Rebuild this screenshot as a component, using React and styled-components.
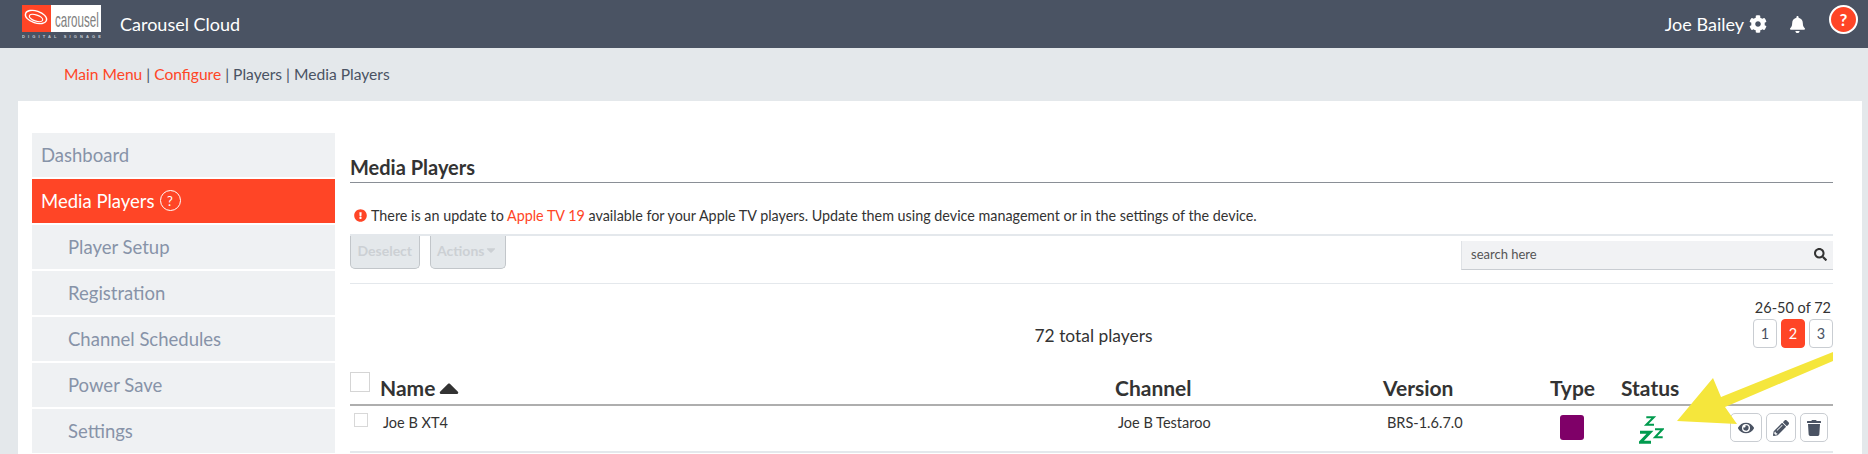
import React from 'react'
import styled, { createGlobalStyle } from 'styled-components'
import {
  FaCog, FaBell, FaEye, FaPencilAlt, FaTrash, FaCaretDown, FaSearch,
  FaExclamationCircle, FaCaretUp,
} from 'react-icons/fa'

const orange = '#ff4526'
const slate = '#4a5363'

const GlobalStyle = createGlobalStyle`
  html, body { margin: 0; padding: 0; height: 100%; overflow: hidden; }
  body {
    background: #e4e8eb;
    font-family: Lato, "Open Sans", sans-serif;
    color: #333;
  }
  * { box-sizing: border-box; }
`

// HEADER
const TopBar = styled.header`
  display: flex;
  align-items: center;
  height: 48px;
  padding: 0 10px 0 22px;
  background: ${slate};
  color: #fff;
`
const Logo = styled.svg`
  width: 79px;
  height: 36px;
  margin-bottom: 2px;
`
const AppName = styled.div`
  margin-left: 19px;
  font-size: 18px;
`
const UserArea = styled.div`
  display: flex;
  align-items: center;
  margin-left: auto;
  font-size: 18px;
`
const UserName = styled.span`
  margin-right: 5px;
`
const BellWrap = styled.span`
  display: flex;
  margin: 0 23px 0 22px;
  font-size: 17px;
`
const HelpBadge = styled.span`
  display: flex;
  align-items: center;
  justify-content: center;
  width: 29px;
  height: 29px;
  margin-bottom: 10px;
  border: 2px solid #fff;
  border-radius: 50%;
  background: ${orange};
  font-size: 17px;
  font-weight: 700;
`

// BREADCRUMB
const Crumbs = styled.nav`
  height: 53px;
  padding: 16px 0 0 64px;
  font-size: 15.6px;
  line-height: 20px;
  color: ${slate};
`
const CrumbLink = styled.span`
  color: ${orange};
`

// PAGE
const Card = styled.div`
  display: flex;
  height: 353px;
  margin: 0 6px 0 18px;
  padding: 32px 29px 0 14px;
  background: #fff;
  gap: 15px;
  overflow: hidden;
`
const Sidebar = styled.aside`
  display: flex;
  flex-direction: column;
  flex: none;
  width: 303px;
  gap: 2px;
`
const SideItem = styled.div`
  display: flex;
  align-items: center;
  flex: none;
  height: 44px;
  padding-left: ${p => (p.$sub ? '36px' : '9px')};
  padding-bottom: 1px;
  background: ${p => (p.$active ? orange : '#eff1f3')};
  color: ${p => (p.$active ? '#fff' : '#8793a8')};
  font-size: 18.5px;
`
const HelpRing = styled.span`
  display: flex;
  align-items: center;
  justify-content: center;
  width: 21px;
  height: 21px;
  margin-left: 5px;
  border: 1px solid #fff;
  border-radius: 50%;
  font-size: 13px;
`
const Main = styled.main`
  flex: 1;
  min-width: 0;
`
const Title = styled.h2`
  height: 50px;
  margin: 0;
  padding-top: 22px;
  border-bottom: 1px solid #8a8f96;
  font-size: 20px;
  font-weight: 700;
  line-height: 24px;
  color: #333;
`
const Notice = styled.div`
  display: flex;
  align-items: center;
  height: 53px;
  padding: 13px 0 0 4px;
  border-bottom: 2px solid #e4e8ec;
  font-size: 14.33px;
`
const NoticeIcon = styled(FaExclamationCircle)`
  margin-right: 4px;
  color: ${orange};
  font-size: 13px;
`
const Accent = styled.span`
  color: ${orange};
  white-space: pre;
`
const Tools = styled.div`
  display: flex;
  align-items: flex-start;
  height: 48px;
  border-bottom: 1px solid #e4e8ec;
`
const GhostButton = styled.div`
  display: flex;
  align-items: center;
  height: 33px;
  margin-top: 0;
  margin-right: 10px;
  padding: 0 6.5px 4px;
  border: 1px solid #c2c6ca;
  border-top: 0;
  border-radius: 0 0 5px 5px;
  background: #e4e8eb;
  color: #ccd0d4;
  font-size: 14px;
  font-weight: 700;
`
const Search = styled.div`
  display: flex;
  align-items: center;
  justify-content: space-between;
  width: 372px;
  height: 29px;
  margin: 5px 0 0 auto;
  padding: 0 6px 2px 9px;
  background: #f1f2f4;
  border-bottom: 1px solid #c9cdd2;
  border-left: 1px solid #dfe2e6;
  font-size: 13px;
  color: #555;
`
const SearchIcon = styled(FaSearch)`
  color: #333;
  font-size: 13px;
`
const PagerRow = styled.div`
  display: flex;
  align-items: flex-start;
  height: 84px;
`
const TotalLabel = styled.div`
  flex: 1;
  padding-top: 41px;
  padding-left: 84px;
  text-align: center;
  font-size: 17.4px;
`
const Pager = styled.div`
  display: flex;
  flex-direction: column;
  align-items: flex-end;
  padding-top: 14px;
`
const PagerLabel = styled.div`
  height: 21px;
  margin-right: 2px;
  font-size: 14.5px;
  line-height: 20px;
`
const PagerButtons = styled.div`
  display: flex;
  gap: 4px;
`
const PageButton = styled.div`
  display: flex;
  align-items: center;
  justify-content: center;
  width: 24px;
  height: 29px;
  border: 1px solid ${p => (p.$active ? orange : '#c9cdd2')};
  border-radius: 4px;
  background: ${p => (p.$active ? orange : '#fff')};
  color: ${p => (p.$active ? '#fff' : slate)};
  font-size: 14.5px;
`

// TABLE
const columns = '30px 735px 268px 167px 71px 1fr'

const HeadRow = styled.div`
  display: grid;
  grid-template-columns: ${columns};
  align-items: center;
  height: 38px;
  border-bottom: 2px solid #aeaeae;
  font-size: 21px;
  font-weight: 700;
  color: #333;
`
const HeadBox = styled.span`
  display: block;
  width: 20px;
  height: 20px;
  margin-bottom: 8px;
  border: 1px solid #d5d5d5;
`
const HeadCell = styled.div`
  display: flex;
  align-items: center;
  padding-top: 3px;
`
const SortIcon = styled(FaCaretUp)`
  margin-left: -2px;
  font-size: 32px;
`
const BodyRow = styled.div`
  display: grid;
  grid-template-columns: ${columns};
  height: 47px;
  border-bottom: 2px solid #e4e8ec;
  font-size: 14.5px;
`
const RowBox = styled.span`
  display: block;
  width: 14px;
  height: 14px;
  margin: 7px 0 0 4px;
  border: 1px solid #d8d8d8;
`
const BodyCell = styled.div`
  padding: 8px 0 0 ${p => (p.$inset ? 4 : 3)}px;
  line-height: 18px;
`
const Swatch = styled.span`
  display: block;
  width: 24px;
  height: 25px;
  margin: 1px 0 0 7px;
  border-radius: 3px;
  background: #7f0068;
`
const StatusCell = styled.div`
  display: flex;
  justify-content: space-between;
  padding: 7px 5px 0 18px;
`
const Sleep = styled.svg`
  width: 25px;
  height: 28px;
  margin-top: 3px;
`
const RowActions = styled.div`
  display: flex;
  gap: 4px;
  height: 29px;
`
const ActionButton = styled.div`
  display: flex;
  align-items: center;
  justify-content: center;
  width: ${p => p.$w}px;
  height: 29px;
  border: 1px solid #c9cdd2;
  border-radius: 5px;
  background: #fff;
  color: ${slate};
  font-size: 16px;
`

// ANNOTATION
const Arrow = styled.svg`
  position: absolute;
  left: 1660px;
  top: 340px;
  width: 190px;
  height: 100px;
`

const SideNav = ['Player Setup', 'Registration', 'Channel Schedules', 'Power Save', 'Settings']

const App = () => (
  <>
    <GlobalStyle />
    <TopBar>
      <Logo viewBox="0 0 79 36">
        <rect x="0" y="0" width="29" height="27" fill={orange} />
        <rect x="29" y="0" width="50" height="27" fill="#fff" />
        <ellipse cx="14" cy="12" rx="11" ry="6" fill="none" stroke="#fff" strokeWidth="1.4" transform="rotate(18 14 12)" />
        <ellipse cx="14" cy="13" rx="7" ry="3" fill="none" stroke="#fff" strokeWidth="1.2" transform="rotate(18 14 13)" />
        <text transform="translate(33 22) scale(.58 1)" fontFamily="Liberation Sans, sans-serif" fontSize="20" fill="#808080">carousel</text>
        <text x="0" y="33" fontFamily="Liberation Sans, sans-serif" fontSize="4" fontWeight="700" fill="#c6ccd4" textLength="79">DIGITAL SIGNAGE</text>
      </Logo>
      <AppName>Carousel Cloud</AppName>
      <UserArea>
        <UserName>Joe Bailey</UserName>
        <FaCog />
        <BellWrap><FaBell /></BellWrap>
        <HelpBadge>?</HelpBadge>
      </UserArea>
    </TopBar>
    <Crumbs>
      <CrumbLink>Main Menu</CrumbLink> | <CrumbLink>Configure</CrumbLink> | Players | Media Players
    </Crumbs>
    <Card>
      <Sidebar>
        <SideItem>Dashboard</SideItem>
        <SideItem $active>Media Players<HelpRing>?</HelpRing></SideItem>
        {SideNav.map(label => <SideItem $sub key={label}>{label}</SideItem>)}
      </Sidebar>
      <Main>
        <Title>Media Players</Title>
        <Notice>
          <NoticeIcon />
          <span>
            There is an update to <Accent>Apple TV 19</Accent> available for your Apple TV players. Update them using device management or in the settings of the device.
          </span>
        </Notice>
        <Tools>
          <GhostButton>Deselect</GhostButton>
          <GhostButton>Actions<FaCaretDown /></GhostButton>
          <Search>search here<SearchIcon /></Search>
        </Tools>
        <PagerRow>
          <TotalLabel>72 total players</TotalLabel>
          <Pager>
            <PagerLabel>26-50 of 72</PagerLabel>
            <PagerButtons>
              <PageButton>1</PageButton>
              <PageButton $active>2</PageButton>
              <PageButton>3</PageButton>
            </PagerButtons>
          </Pager>
        </PagerRow>
        <HeadRow>
          <HeadBox />
          <HeadCell>Name<SortIcon /></HeadCell>
          <HeadCell>Channel</HeadCell>
          <HeadCell>Version</HeadCell>
          <HeadCell>Type</HeadCell>
          <HeadCell>Status</HeadCell>
        </HeadRow>
        <BodyRow>
          <RowBox />
          <BodyCell>Joe B XT4</BodyCell>
          <BodyCell>Joe B Testaroo</BodyCell>
          <BodyCell $inset>BRS-1.6.7.0</BodyCell>
          <BodyCell><Swatch /></BodyCell>
          <StatusCell>
            <Sleep viewBox="0 0 25 28">
              <g fill="none" stroke="#009b4e" strokeMiterlimit="10">
                <polyline strokeWidth="2" points="7.3,1.3 14.8,1.3 7.3,8.7 15,8.7" />
                <polyline strokeWidth="3" points="1,16.2 11,16.2 1.5,26.2 12,26.2" />
                <polyline strokeWidth="2" points="16,13.3 23.5,13.3 16,21.3 23.7,21.3" />
              </g>
            </Sleep>
            <RowActions>
              <ActionButton $w={32}><FaEye /></ActionButton>
              <ActionButton $w={30}><FaPencilAlt /></ActionButton>
              <ActionButton $w={28}><FaTrash /></ActionButton>
            </RowActions>
          </StatusCell>
        </BodyRow>
      </Main>
    </Card>
    <Arrow viewBox="1660 340 190 100">
      <polygon points="1833,352 1833,361 1725,407 1737,424 1677,421 1713,378 1721,397" fill="#f5e63c" />
    </Arrow>
  </>
)

export default App
